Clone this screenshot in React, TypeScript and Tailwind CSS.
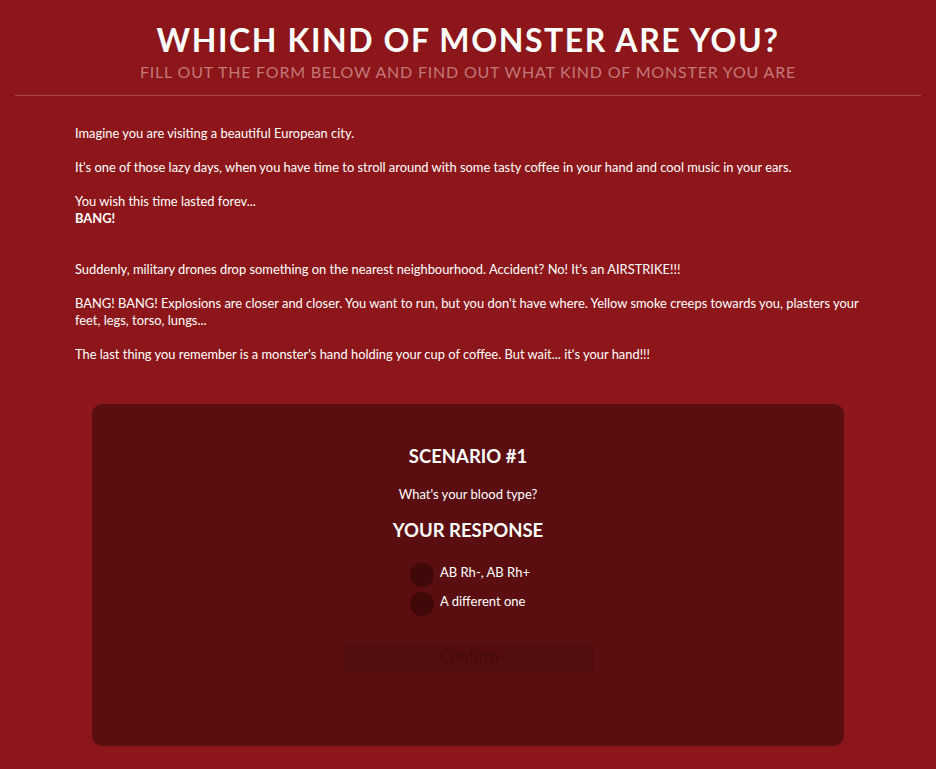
import React from 'react';

export default function App() {
  const options = ['AB Rh-, AB Rh+', 'A different one'];

  return (
    <div className="min-h-[769px] w-full bg-[#8c1619] text-white" style={{ fontFamily: 'Lato, "Open Sans", sans-serif' }}>
      <header className="px-[15px] pt-[20px]">
        <h1 className="text-center text-[32px] font-bold leading-[40px] tracking-[1.6px]">WHICH KIND OF MONSTER ARE YOU?</h1>
        <p className="text-center text-[16px] leading-[24px] tracking-[0.8px] text-[#c67679]">
          FILL OUT THE FORM BELOW AND FIND OUT WHAT KIND OF MONSTER YOU ARE
        </p>
        <hr className="mt-[11px] border-0 border-t border-[#a84649]" />
      </header>

      <main className="px-[75px] pt-[29px] text-[12.9px] leading-[17px]">
        <p>Imagine you are visiting a beautiful European city.</p>
        <br />
        <p>It's one of those lazy days, when you have time to stroll around with some tasty coffee in your hand and cool music in your ears.</p>
        <br />
        <p>You wish this time lasted forev...</p>
        <p className="font-bold">BANG!</p>
        <br />
        <br />
        <p>Suddenly, military drones drop something on the nearest neighbourhood. Accident? No! It's an AIRSTRIKE!!!</p>
        <br />
        <p>BANG! BANG! Explosions are closer and closer. You want to run, but you don't have where. Yellow smoke creeps towards you, plasters your feet, legs, torso, lungs...</p>
        <br />
        <p>The last thing you remember is a monster's hand holding your cup of coffee. But wait... it's your hand!!!</p>
      </main>

      <section className="mx-[92px] mt-[41px] flex h-[342px] flex-col items-center rounded-[10px] bg-[#5b0e0f] pt-[39px]">
        <h2 className="text-[18.5px] font-bold leading-[26px]">SCENARIO #1</h2>
        <p className="mt-[17px] text-[13px] leading-[17px]">What's your blood type?</p>
        <h3 className="mt-[14px] text-[18.5px] font-bold leading-[26px]">YOUR RESPONSE</h3>
        <div className="ml-[4px] mt-[20px] flex flex-col gap-[5px]">
          {options.map((opt) => (
            <label key={opt} className="flex h-[24px] items-center gap-[6px] text-[13px] leading-[17px]">
              <span className="h-[24px] w-[24px] rounded-full bg-[#410809]" />
              <span className="-mt-[6px]">{opt}</span>
            </label>
          ))}
        </div>
        <button className="ml-[2px] mt-[26px] h-[31px] w-[250px] bg-[#540d0e] text-[15px] text-[#420a0b]" style={{ fontFamily: '"DejaVu Sans", sans-serif' }}>
          Confirm
        </button>
      </section>
    </div>
  );
}
